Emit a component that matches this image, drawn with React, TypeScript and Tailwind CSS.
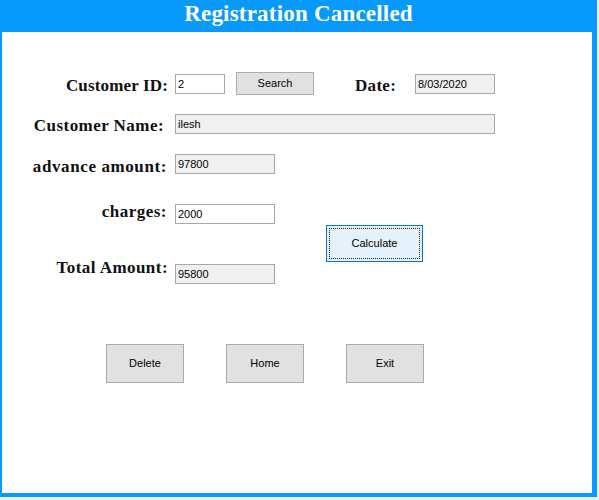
import React from "react";

const serif = { fontFamily: '"Liberation Serif", "Times New Roman", serif' };
const sans = { fontFamily: '"Liberation Sans", Arial, sans-serif' };

function Field({
  value,
  width,
  readOnly,
  className = "",
}: {
  value: string;
  width: string;
  readOnly?: boolean;
  className?: string;
}) {
  return (
    <div
      style={sans}
      className={`${width} h-[20px] shrink-0 flex items-center pl-[2px] text-[11px] text-black border border-[#a8a8a8] ${
        readOnly ? "bg-[#f0f0f0]" : "bg-white"
      } ${className}`}
    >
      {value}
    </div>
  );
}

function Label({
  text,
  className = "",
}: {
  text: string;
  className?: string;
}) {
  return (
    <div
      style={serif}
      className={`w-[166px] shrink-0 text-right text-[17px] leading-[20px] font-bold text-[#111] whitespace-nowrap ${className}`}
    >
      {text}
    </div>
  );
}

function WinButton({
  label,
  className = "",
}: {
  label: string;
  className?: string;
}) {
  return (
    <div
      style={sans}
      className={`w-[78px] shrink-0 flex items-center justify-center text-[11px] text-black bg-[#e1e1e1] border border-[#adadad] ${className}`}
    >
      {label}
    </div>
  );
}

export default function App() {
  return (
    <div className="w-[599px] h-[500px] bg-[#eaf6fe]">
      <div className="w-[597px] h-[497px] bg-[#0799fb] flex flex-col">
        <div
          style={serif}
          className="h-[32px] shrink-0 flex items-start justify-center pt-[1px] text-[23px] leading-[26px] font-bold text-white tracking-[0.2px]"
        >
          Registration Cancelled
        </div>

        <div className="flex-1 ml-[2px] mr-[5px] mb-[4px] bg-white flex flex-col">
          {/* customer id / date */}
          <div className="mt-[40px] h-[23px] flex items-start">
            <Label text="Customer ID:" className="mt-[4px] tracking-[0.15px]" />
            <Field value="2" width="w-[50px]" className="ml-[7px] mt-[2px]" />
            <WinButton label="Search" className="ml-[11px] h-[23px]" />
            <div
              style={serif}
              className="ml-[41px] w-[41px] mt-[4px] text-[17px] leading-[20px] font-bold text-[#111] tracking-[0.3px]"
            >
              Date:
            </div>
            <Field
              value="8/03/2020"
              width="w-[80px]"
              readOnly
              className="ml-[19px] mt-[2px]"
            />
          </div>

          {/* name */}
          <div className="mt-[19px] h-[20px] flex items-start">
            <Label
              text="Customer Name:"
              className="mt-[2px] pr-[4px] tracking-[0.45px]"
            />
            <Field value="ilesh" width="w-[320px]" readOnly className="ml-[7px]" />
          </div>

          {/* advance */}
          <div className="mt-[20px] h-[20px] flex items-start">
            <Label
              text="advance amount:"
              className="mt-[3px] pr-[1px] tracking-[0.6px]"
            />
            <Field value="97800" width="w-[100px]" readOnly className="ml-[7px]" />
          </div>

          {/* charges / total + calculate */}
          <div className="mt-[28px] flex items-start">
            <div className="flex flex-col">
              <div className="flex items-start">
                <Label text="charges:" className="pr-[1px] tracking-[0.5px]" />
                <Field value="2000" width="w-[100px]" className="ml-[7px] mt-[2px]" />
              </div>
              <div className="mt-[33px] flex items-start">
                <Label text="Total Amount:" className="mt-[1px] tracking-[0.45px]" />
                <Field
                  value="95800"
                  width="w-[100px]"
                  readOnly
                  className="ml-[7px] mt-[7px]"
                />
              </div>
            </div>
            <div className="ml-[51px] mt-[23px] w-[97px] h-[37px] border border-[#0078d7] bg-[#e5f1fb] p-[2px]">
              <div
                style={sans}
                className="w-full h-full border border-dotted border-[#222] flex items-center justify-center text-[11px] text-black"
              >
                Calculate
              </div>
            </div>
          </div>

          {/* actions */}
          <div className="mt-[60px] ml-[104px] flex gap-[42px]">
            <WinButton label="Delete" className="h-[39px]" />
            <WinButton label="Home" className="h-[39px]" />
            <WinButton label="Exit" className="h-[39px]" />
          </div>
        </div>
      </div>
    </div>
  );
}
